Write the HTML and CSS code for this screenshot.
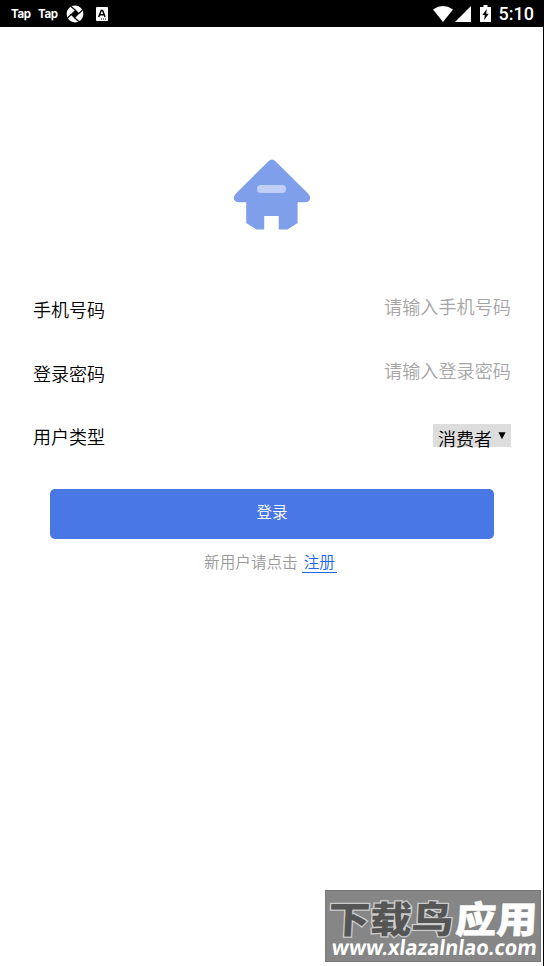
FILE: index.html
```html
<!DOCTYPE html>
<html lang="zh-CN">
<head>
<meta charset="utf-8">
<title>登录</title>
<link rel="stylesheet" href="styles.css">
</head>
<body>
<div class="screen">
  <header class="status">
    <span class="tap">Tap</span>
    <span class="tap">Tap</span>
    <svg class="ball" width="18" height="18" viewBox="0 0 18 18">
      <circle cx="9" cy="9" r="8.400" fill="#fff"/>
      <path d="M9.500 4.600 13.400 8.500 8.500 13.400 4.600 9.500Z" fill="#000"/>
      <path d="M9.500 5.200 5 1.500M12.800 8.500 16.500 5M8.500 12.800 13 16.500M5.200 9.500 1.500 13" stroke="#000" stroke-width="1.200"/>
    </svg>
    <svg class="lang" width="12" height="14" viewBox="0 0 12 14">
      <rect width="12" height="14" rx="1" fill="#fff"/>
      <path d="M2.700 10 5.200 3.400H6.600L9.100 10M3.800 7.800H8" fill="none" stroke="#000" stroke-width="1.500"/>
      <path d="M5 12h1M7 12h1M9 12h1" stroke="#000"/>
    </svg>
    <div class="system">
      <svg width="20" height="16" viewBox="0 0 20 16"><path d="M0 3.400Q10-3.200 20 3.400L10 16Z" fill="#fff"/></svg>
      <svg class="signal" width="16" height="16" viewBox="0 0 16 16"><path d="M16 0V16H0Z" fill="#fff"/></svg>
      <svg class="battery" width="11" height="17" viewBox="0 0 11 17"><path d="M3.500 0h4v2H11v15H0V2h3.500Z" fill="#fff"/><path d="M6.800 4 2.300 10h2.500L4.200 15 8.700 8.800H6.200Z" fill="#000"/></svg>
      <time class="clock">5:10</time>
    </div>
  </header>
  <main class="login">
    <svg class="logo" width="78" height="72" viewBox="0 0 78 72">
      <path d="M35.500 2.200Q39-1.200 42.500 2.200L75.500 35Q78 38 76.800 40.500Q75.800 43.200 72 43.200H64.600V64L54.500 70.500H45.700V57H31.200V70.500H23.500L13.200 64V43.200H6Q2.200 43.200 1 40.500Q0 38 2.500 35Z" fill="#7f9fea"/>
      <rect x="24" y="26" width="29" height="8" rx="4" fill="#bfcff5"/>
    </svg>
    <form class="form">
      <label class="row"><span class="name">手机号码</span><input class="field" type="text" placeholder="请输入手机号码"></label>
      <label class="row"><span class="name">登录密码</span><input class="field" type="password" placeholder="请输入登录密码"></label>
      <div class="row"><span class="name type">用户类型</span>
        <div class="select"><span class="value">消费者</span><svg class="arrow" width="8" height="8" viewBox="0 0 8 8"><path d="M.4.3H7.600L4 7.300Z"/></svg></div>
      </div>
      <button class="submit" type="button">登录</button>
    </form>
    <p class="hint">新用户请点击<a class="register">注册</a></p>
  </main>
  <svg class="watermark" width="216" height="72" viewBox="0 0 216 72">
    <rect width="216" height="72" fill="#868686"/>
    <rect x=".5" y=".5" width="215" height="71" fill="none" stroke="#777"/>
    <g class="brand" transform="skewX(-3)">
      <text class="dark" x="5" y="43" textLength="125" lengthAdjust="spacingAndGlyphs">下载鸟</text>
      <text class="light" x="132" y="43" textLength="82" lengthAdjust="spacingAndGlyphs">应用</text>
    </g>
    <text class="site" transform="translate(6 65) skewX(-7)" textLength="205" lengthAdjust="spacingAndGlyphs">www.xlazalnlao.com</text>
  </svg>
</div>
</body>
</html>
```

FILE: styles.css
```css
* { box-sizing: border-box; }
body {
  margin: 0;
  background: #fff;
  color: #000;
  font-family: Roboto, "Noto Sans CJK SC", sans-serif;
}
.screen {
  position: relative;
  height: 966px;
  border-right: 1px solid #000;
  overflow: hidden;
}
.status {
  display: flex;
  align-items: center;
  height: 27px;
  padding: 0 9px 0 11px;
  background: #000;
  color: #fff;
}
.tap {
  width: 20px;
  margin-right: 7px;
  font: 700 11.500px/20px Inter, sans-serif;
  letter-spacing: -.4px;
}
.ball { margin-left: 1px; }
.lang { margin-left: 12px; }
.system { display: flex; align-items: center; margin-left: auto; }
.signal { margin-left: 2px; }
.battery { margin-left: 9px; }
.clock { margin-left: 8px; font-size: 18px; font-weight: 500; line-height: 26px; padding-top: 1px; }
.login { display: flex; flex-direction: column; padding: 132px 32px 0 33px; }
.logo { align-self: center; }
.form { display: flex; flex-direction: column; margin-top: 46px; }
.row { display: flex; justify-content: space-between; align-items: center; height: 64px; }
.name { padding-top: 4px; font-size: 18px; font-weight: 350; line-height: 26px; }
.type { padding-top: 2px; }
.field {
  width: 240px;
  padding: 0;
  margin-bottom: 7px;
  border: 0;
  outline: 0;
  background: none;
  text-align: right;
  font: 350 18.150px/26px "Noto Sans CJK SC", sans-serif;
}
.field::placeholder { color: #a5a5a5; opacity: 1; }
.select {
  display: flex;
  width: 78px;
  height: 23px;
  margin-bottom: 3px;
  padding: 3px 5px 0;
  background: #ddd;
}
.value { font-size: 18px; font-weight: 350; line-height: 26px; }
.arrow { margin: 5px 0 0 6px; flex: none; }
.submit {
  height: 50px;
  margin: 20px 17px 0;
  padding: 0 0 6px;
  border: 0;
  border-radius: 5px;
  background: #4977e3;
  color: #fff;
  font: 350 15.500px/24px "Noto Sans CJK SC", sans-serif;
}
.hint {
  display: flex;
  justify-content: center;
  margin: 14px 3px 0 0;
  color: #999;
  font-size: 15.600px;
  font-weight: 350;
  line-height: 20px;
}
.register {
  height: 20px;
  margin-left: 4px;
  padding: 0 2px;
  border-bottom: 1px solid #1c67ee;
  color: #1c67ee;
}
.watermark { position: absolute; left: 325px; top: 890px; }
.brand { font: 900 37px "Noto Sans CJK SC", sans-serif; }
.dark { fill: #555; stroke: #ccc; stroke-width: 2.500px; paint-order: stroke; }
.light { fill: #fff; stroke: #fff; stroke-width: .5px; }
.site { fill: #fff; font: 700 21px "Noto Sans", sans-serif; }
```
